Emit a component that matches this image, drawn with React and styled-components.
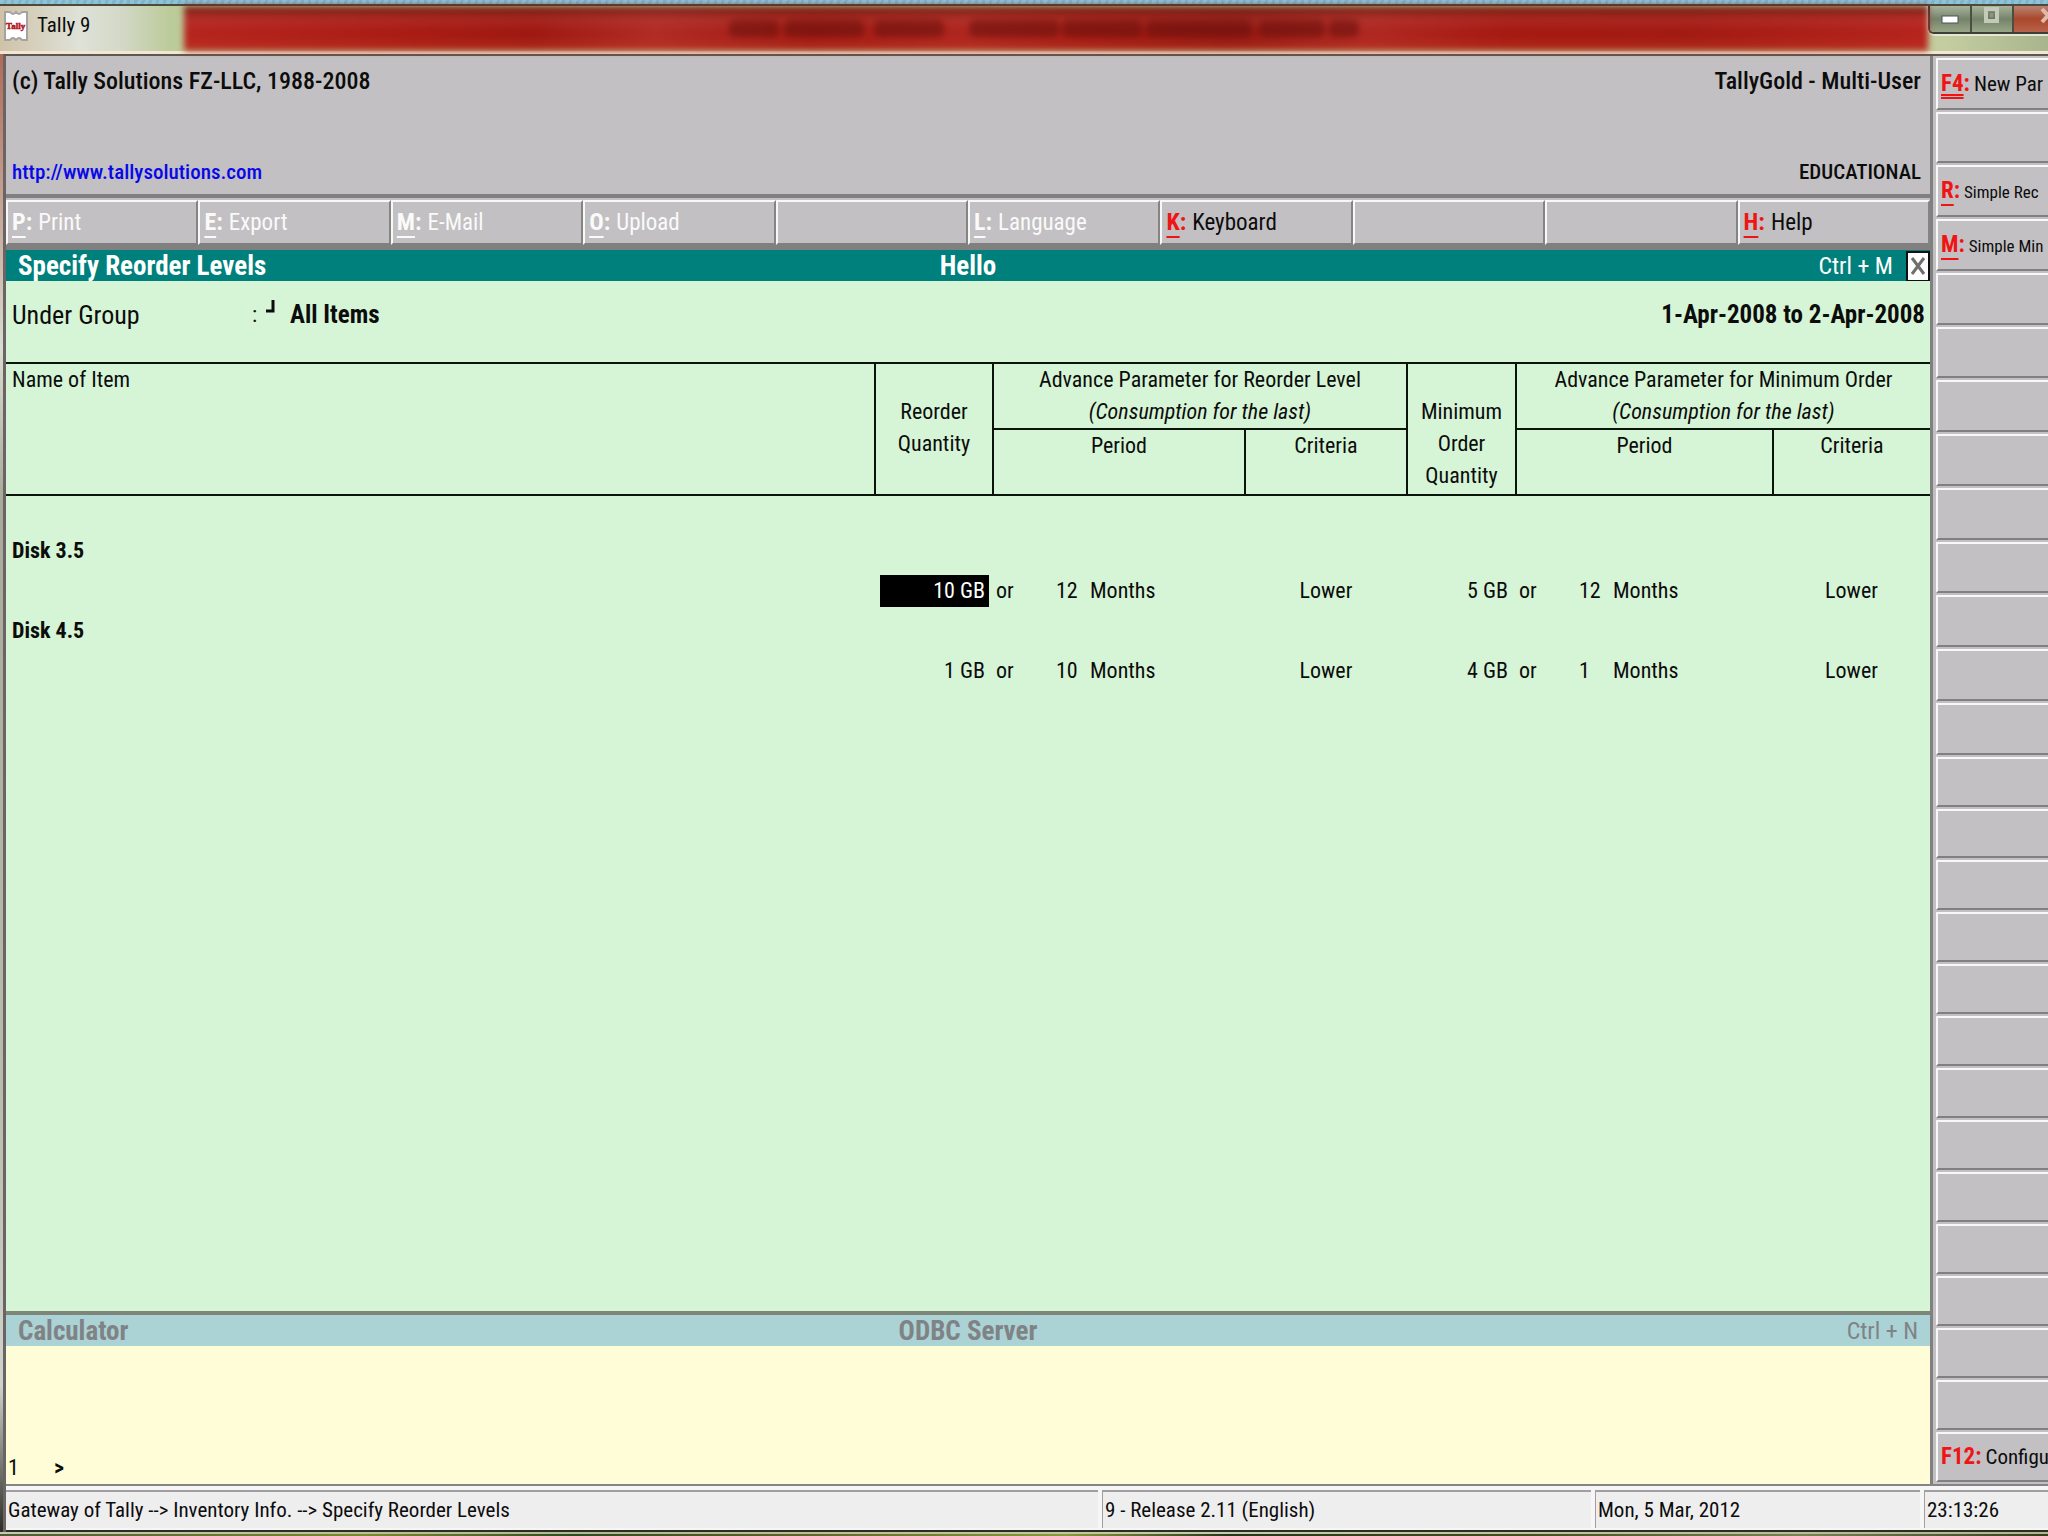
import React from "react";
import styled, { createGlobalStyle, css } from "styled-components";

const GlobalStyle = createGlobalStyle`
  *, *::before, *::after { box-sizing: border-box; }
  body {
    margin: 0;
    font-family: "Roboto Condensed", "Liberation Sans Narrow", "Liberation Sans", sans-serif;
    font-size: 22px;
    line-height: 32px;
    color: #0c0c0c;
  }
  button, input { font: inherit; color: inherit; border-radius: 0; }
`;

const Desktop = styled.div`
  min-height: 100vh;
  display: flex;
  flex-direction: column;
  overflow: hidden;
  background: linear-gradient(90deg, #4f5a33, #7d8a2c 18%, #2f4a26 28%, #5f5d2b 38%, #8b9a3a 52%, #26351f 60%, #4a4d22 75%, #7a8058 88%, #3b3a20);
`;

const Wallpaper = styled.div`
  height: 4px;
  background: repeating-linear-gradient(105deg, #8fc3d6 0 4px, #7fb4cc 4px 7px);
`;

const TitleBar = styled.header`
  height: 50px;
  display: flex;
  border-top: 2px solid #4d4a3c;
  border-bottom: 3px solid #f4e6d0;
  background: linear-gradient(90deg, #cfc2a8, #dfe2d8 80px, #d3d9c8 120px, #bccb9a 170px, #b9c78f 90%, #c3cda0 95%, #a9b58e);
`;

const AppTitle = styled.h1`
  flex: 0 0 184px;
  margin: 0;
  padding: 3px 0 0 4px;
  display: flex;
  align-items: flex-start;
  gap: 9px;
  font-size: 21px;
  font-weight: 400;
`;

const Glass = styled.div`
  flex: 1;
  min-width: 0;
  filter: blur(3px);
  background:
    linear-gradient(180deg, rgba(90, 30, 15, 0.75), rgba(190, 70, 65, 0.35) 30%, transparent 60%, rgba(190, 60, 40, 0.5)),
    linear-gradient(90deg, #b5231d, #a81a12 12%, #9c160f 20%, #b02a24 27%, #9f1710 36%, #ad241d 45%, #a11811 52%, #8f140e 60%, #ae2620 68%, #a3170f 76%, #a01810 86%, #b5221c);
`;

const WindowControls = styled.div`
  flex: 0 0 120px;
  height: 28px;
  display: flex;
  overflow: hidden;
  border-left: 2px solid #3c4038;
  border-bottom: 2px solid #3c4038;
  border-bottom-left-radius: 6px;
  box-shadow: 0 2px 0 #e3e8cf, -2px 0 0 #e8d9cc;
`;

const ControlButton = styled.button`
  flex: 0 0 ${(p) => (p.$close ? 70 : 42)}px;
  padding: 0;
  display: flex;
  justify-content: center;
  border: 0;
  border-right: 2px solid #4a4f42;
  background: ${(p) =>
    p.$close
      ? "linear-gradient(180deg, #b98471, #a9472b 50%, #b9634a)"
      : "linear-gradient(180deg, #a9b39c, #75836a 50%, #98a586)"};
`;

const Frame = styled.div`
  flex: 1;
  display: flex;
  flex-direction: column;
  border-image: linear-gradient(180deg, #b06a58, #d9dcd0 20%, #a8aa9a 30%, #b8bcaa 70%, #cfd3cc 90%, #2b2c24) 1;
  border-style: solid;
  border-width: 0 0 0 3px;
`;

const Client = styled.div`
  flex: 1;
  display: flex;
  flex-direction: column;
  border-left: 3px solid #6a6464;
  border-top: 2px solid #5c5852;
  background: #c2c0c2;
`;

const Workspace = styled.div`
  flex: 1;
  display: flex;
  border-bottom: 2px solid #848484;
`;

const MainColumn = styled.main`
  flex: 1;
  min-width: 0;
  display: flex;
  flex-direction: column;
`;

const ProductInfo = styled.section`
  height: 138px;
  padding: 9px 9px 6px 6px;
  display: flex;
  flex-direction: column;
  justify-content: space-between;
  font-weight: 500;
  font-size: 24px;
`;

const InfoRow = styled.div`
  display: flex;
  justify-content: space-between;
`;

const SiteLink = styled.a`
  color: #0808e8;
  font-size: 21px;
  text-decoration: none;
`;

const Edition = styled.span`
  font-size: 21px;
`;

const Toolbar = styled.nav`
  display: grid;
  grid-template-columns: repeat(10, 1fr);
  border-top: 4px solid #808080;
  border-bottom: 5px solid #808080;
  padding-top: 2px;
`;

const face = css`
  border: 2px solid #f8f8f8;
  border-bottom-color: #808080;
  background: #c2c0c2;
  text-align: left;
  white-space: nowrap;
  overflow: hidden;
`;

const ToolButton = styled.button`
  ${face}
  height: 45px;
  padding: 0 0 0 4px;
  font-size: 23px;
  border-right-color: #848484;
  color: ${(p) => (p.disabled ? "#fafafa" : "#0c0c0c")};
`;

const Key = styled.b`
  margin-right: 6px;
  font-size: 24px;
  color: ${(p) => (p.$muted ? "inherit" : "#f01414")};

  u {
    text-decoration: underline ${(p) => (p.$double ? "double" : "solid")};
    text-decoration-thickness: 2px;
    text-underline-offset: ${(p) => (p.$double ? 3 : 6)}px;
    text-decoration-skip-ink: none;
  }
`;

const SideButton = styled.button`
  ${face}
  flex: ${(p) => p.$grow} 1 0;
  padding: 0 0 0 3px;
  border-right-width: 0;
  font-size: ${(p) => (p.$small ? 17 : 21)}px;

  ${Key} {
    margin-right: 4px;
    font-size: 23px;
  }
`;

const SidePanel = styled.aside`
  flex: 0 0 118px;
  min-width: 0;
  overflow: hidden;
  display: flex;
  flex-direction: column;
  gap: 2px;
  padding: 2px 0 2px 3px;
  border-left: 3px solid #808080;
`;

const PanelBar = styled.div`
  height: 31px;
  display: grid;
  grid-template-columns: 1fr auto 1fr;
  align-items: center;
  background: ${(p) => (p.$active ? "#00807c" : "#abd2d4")};
  color: ${(p) => (p.$active ? "#ffffff" : "#7f8385")};

  h2 { padding-left: 12px; }
`;

const PanelTitle = styled.h2`
  margin: 0;
  font-size: 27px;
  font-weight: 700;
`;

const PanelEnd = styled.div`
  height: 31px;
  display: flex;
  justify-content: flex-end;
  align-items: center;
  gap: 13px;
  padding-right: ${(p) => (p.$flush ? 0 : 12)}px;
  font-size: 24px;
`;

const CloseBox = styled.button`
  width: 24px;
  height: 31px;
  padding: 0;
  display: flex;
  align-items: center;
  justify-content: center;
  border: 2px solid #101010;
  background: #ffffff;
`;

const Report = styled.section`
  flex: 1;
  background: #d6f5d6;
`;

const GroupLine = styled.div`
  height: 81px;
  padding: 18px 5px 0 6px;
  display: flex;
`;

const GroupName = styled.span`
  flex: 0 0 240px;
  font-size: 26px;
`;

const GroupMark = styled.span`
  flex: 0 0 38px;
  display: flex;
  gap: 7px;
`;

const Strong = styled.b`
  font-size: 25px;
  margin-left: ${(p) => (p.$end ? "auto" : 0)};
`;

const Grid = styled.table`
  width: 100%;
  border-collapse: collapse;
  table-layout: fixed;

  th, td { padding: 0; font-weight: 400; vertical-align: top; }
`;

const Head = styled.thead`
  border-top: 2px solid #0a140a;
  border-bottom: 2px solid #0a140a;

  th { height: 66px; border-left: 2px solid #0a140a; }
  th:first-child { border-left: 0; }
  tr + tr th { border-top: 2px solid #0a140a; }
  tr + tr th:first-child { border-left: 2px solid #0a140a; }
`;

const NameHead = styled.th`
  text-align: left;

  && { padding-left: 6px; }
`;

const DropHead = styled.th`
  && { padding: 32px ${(p) => p.$pad}px 0; }
`;

const Col = styled.col`
  width: ${(p) => p.$w}px;
`;

const Body = styled.tbody`
  tr { height: 40px; }
  td, th { vertical-align: middle; }
`;

const Spacer = styled.tr`
  && { height: 36px; }
`;

const ItemName = styled.th`
  text-align: left;

  &&& { padding-left: 6px; font-weight: 700; font-size: 22px; }
`;

const QtyCell = styled.td`
  && { padding: 0 4px 0 5px; }
`;

const QtyInput = styled.input`
  display: block;
  width: 100%;
  height: 32px;
  padding: 0 4px;
  border: 0;
  outline: 0;
  text-align: right;
  background: ${(p) => (p.$active ? "#000000" : "transparent")};
  color: ${(p) => (p.$active ? "#ffffff" : "inherit")};
`;

const Period = styled.div`
  padding-left: 3px;
  display: grid;
  grid-template-columns: 60px 34px 1fr;
`;

const Center = styled.td`
  text-align: center;
`;

const Calculator = styled.section`
  border-top: 4px solid #7d8678;
`;

const CalcBody = styled.label`
  height: 138px;
  padding: 0 2px;
  display: flex;
  align-items: flex-end;
  background: #fffdd8;
`;

const CalcIndex = styled.span`
  flex: 0 0 46px;
`;

const CalcInput = styled.input`
  flex: 1;
  padding: 0 6px;
  border: 0;
  outline: 0;
  background: transparent;
`;

const StatusBar = styled.footer`
  display: grid;
  grid-template-columns: 1092px minmax(0, 1fr) 325px 124px;
  column-gap: 4px;
  padding: 4px 0 2px;
  background: #f7f6f7;
  border-bottom: 2px solid #2c2e22;
`;

const StatusCell = styled.div`
  height: 38px;
  padding: 2px 0 0 2px;
  border-top: 2px solid #a09ea0;
  border-left: ${(p) => (p.$first ? "0" : "1px solid #a09ea0")};
  background: #efeeef;
  font-size: 21px;
  white-space: nowrap;
  overflow: hidden;
`;

const GlassEdge = styled.div`
  height: 4px;
  border-bottom: 2px solid transparent;
  background: linear-gradient(90deg, #c3c8b4, #b3b98f 30%, #c6ccaa 60%, #b0b68e) padding-box;
`;

const tools = [
  ["P", "Print", true], ["E", "Export", true], ["M", "E-Mail", true], ["O", "Upload", true], null,
  ["L", "Language", true], ["K", "Keyboard"], null, null, ["H", "Help"],
];

const side = Array(27).fill(null);
side[0] = ["F4", "New Par", "double"];
side[2] = ["R", "Simple Rec", "single"];
side[3] = ["M", "Simple Min", "single"];
side[26] = ["F12", "Configu", "none"];

const items = [
  { name: "Disk 3.5", qty: "10 GB", n: "12", min: "5 GB", minN: "12", active: true },
  { name: "Disk 4.5", qty: "1 GB", n: "10", min: "4 GB", minN: "1" },
];

function AppIcon() {
  return (
    <svg width="24" height="32" viewBox="0 0 24 32" aria-hidden="true">
      <path d="M1 3h5q3 4 6 0q3 4 6 0h5v28h-5q-3-4-6 0q-3-4-6 0H1z" fill="#fff" stroke="#a3a3a3" strokeWidth="2" />
      <text x="2" y="20" fontFamily="Liberation Serif, serif" fontSize="9" fontWeight="700" fill="#b3131b" stroke="#b3131b" strokeWidth="0.5">Tally</text>
    </svg>
  );
}

function Smudges() {
  return (
    <svg width="100%" height="100%" aria-hidden="true">
      <g fill="#6e120d" opacity="0.6">
        {[[545, 50], [600, 80], [690, 70], [785, 90], [878, 80], [962, 106], [1075, 66], [1145, 30]].map(([x, w]) => (
          <rect key={x} x={x} y="14" width={w} height="17" rx="6" />
        ))}
      </g>
    </svg>
  );
}

function PeriodCell({ n }) {
  return (
    <td>
      <Period><span>or</span><span>{n}</span><span>Months</span></Period>
    </td>
  );
}

export default function App() {
  return (
    <Desktop>
      <GlobalStyle />
      <Wallpaper />
      <TitleBar>
        <AppTitle><AppIcon />Tally 9</AppTitle>
        <Glass><Smudges /></Glass>
        <WindowControls>
          <ControlButton aria-label="Minimize">
            <svg width="20" height="26" aria-hidden="true"><rect x="2" y="10" width="16" height="7" fill="#fff" stroke="#4b5060" strokeWidth="1" /></svg>
          </ControlButton>
          <ControlButton aria-label="Maximize" disabled>
            <svg width="20" height="26" aria-hidden="true">
              <rect x="4" y="3" width="11" height="12" fill="none" stroke="#c3cbb8" strokeWidth="4" />
              <rect x="7" y="6" width="5" height="6" fill="#8b9680" stroke="#65705b" />
            </svg>
          </ControlButton>
          <ControlButton $close aria-label="Close">
            <svg width="20" height="26" aria-hidden="true"><path d="M4 3l12 13M16 3L4 16" stroke="#dfb9aa" strokeWidth="4" /></svg>
          </ControlButton>
        </WindowControls>
      </TitleBar>

      <Frame>
        <Client>
          <Workspace>
            <MainColumn>
              <ProductInfo>
                <InfoRow><span>(c) Tally Solutions FZ-LLC, 1988-2008</span><span>TallyGold - Multi-User</span></InfoRow>
                <InfoRow><SiteLink href="http://www.tallysolutions.com">http://www.tallysolutions.com</SiteLink><Edition>EDUCATIONAL</Edition></InfoRow>
              </ProductInfo>

              <Toolbar>
                {tools.map((t, i) => (
                  <ToolButton key={i} disabled={!t || !!t[2]}>
                    {t && <><Key $muted={t[2]}><u>{t[0]}</u>:</Key>{t[1]}</>}
                  </ToolButton>
                ))}
              </Toolbar>

              <PanelBar $active>
                <PanelTitle>Specify Reorder Levels</PanelTitle>
                <PanelTitle as="span">Hello</PanelTitle>
                <PanelEnd $flush>
                  Ctrl + M
                  <CloseBox aria-label="Close report">
                    <svg width="16" height="20" aria-hidden="true"><path d="M2 2l12 16M14 2L2 18" stroke="#6f6f6f" strokeWidth="3" /></svg>
                  </CloseBox>
                </PanelEnd>
              </PanelBar>

              <Report>
                <GroupLine>
                  <GroupName>Under Group</GroupName>
                  <GroupMark>
                    :
                    <svg width="12" height="18" aria-hidden="true"><path d="M9 1v11H2" fill="none" stroke="#0c0c0c" strokeWidth="3" /></svg>
                  </GroupMark>
                  <Strong>All Items</Strong>
                  <Strong $end>1-Apr-2008 to 2-Apr-2008</Strong>
                </GroupLine>

                <Grid>
                  <colgroup>
                    <col />
                    {[118, 252, 162, 109, 257, 157].map((w, i) => <Col key={i} $w={w} />)}
                  </colgroup>
                  <Head>
                    <tr>
                      <NameHead rowSpan={2} scope="col">Name of Item</NameHead>
                      <DropHead rowSpan={2} scope="col" $pad={10}>Reorder Quantity</DropHead>
                      <th colSpan={2} scope="colgroup">Advance Parameter for Reorder Level<br /><i>(Consumption for the last)</i></th>
                      <DropHead rowSpan={2} scope="col" $pad={8}>Minimum<br />Order<br />Quantity</DropHead>
                      <th colSpan={2} scope="colgroup">Advance Parameter for Minimum Order<br /><i>(Consumption for the last)</i></th>
                    </tr>
                    <tr>
                      <th scope="col">Period</th>
                      <th scope="col">Criteria</th>
                      <th scope="col">Period</th>
                      <th scope="col">Criteria</th>
                    </tr>
                  </Head>
                  <Body>
                    <Spacer><td colSpan={7} /></Spacer>
                    {items.map((it) => (
                      <React.Fragment key={it.name}>
                        <tr><ItemName colSpan={7} scope="rowgroup">{it.name}</ItemName></tr>
                        <tr>
                          <td />
                          <QtyCell><QtyInput $active={it.active} aria-label={`${it.name} reorder quantity`} defaultValue={it.qty} /></QtyCell>
                          <PeriodCell n={it.n} />
                          <Center>Lower</Center>
                          <QtyCell><QtyInput aria-label={`${it.name} minimum order quantity`} defaultValue={it.min} /></QtyCell>
                          <PeriodCell n={it.minN} />
                          <Center>Lower</Center>
                        </tr>
                      </React.Fragment>
                    ))}
                  </Body>
                </Grid>
              </Report>

              <Calculator>
                <PanelBar>
                  <PanelTitle>Calculator</PanelTitle>
                  <PanelTitle as="span">ODBC Server</PanelTitle>
                  <PanelEnd>Ctrl + N</PanelEnd>
                </PanelBar>
                <CalcBody>
                  <CalcIndex>1</CalcIndex>
                  <b>&gt;</b>
                  <CalcInput aria-label="Calculator expression" />
                </CalcBody>
              </Calculator>
            </MainColumn>

            <SidePanel>
              {side.map((s, i) => (
                <SideButton key={i} $grow={i < 13 ? 54 : 52} $small={s && s[2] === "single"}>
                  {s && (
                    <>
                      <Key $double={s[2] === "double"}>{s[2] === "none" ? s[0] : <u>{s[0]}</u>}:</Key>
                      {s[1]}
                    </>
                  )}
                </SideButton>
              ))}
            </SidePanel>
          </Workspace>

          <StatusBar>
            <StatusCell $first>Gateway of Tally --&gt; Inventory Info. --&gt; Specify Reorder Levels</StatusCell>
            <StatusCell>9 - Release 2.11 (English)</StatusCell>
            <StatusCell>Mon, 5 Mar, 2012</StatusCell>
            <StatusCell>23:13:26</StatusCell>
          </StatusBar>
        </Client>
      </Frame>
      <GlassEdge />
    </Desktop>
  );
}
